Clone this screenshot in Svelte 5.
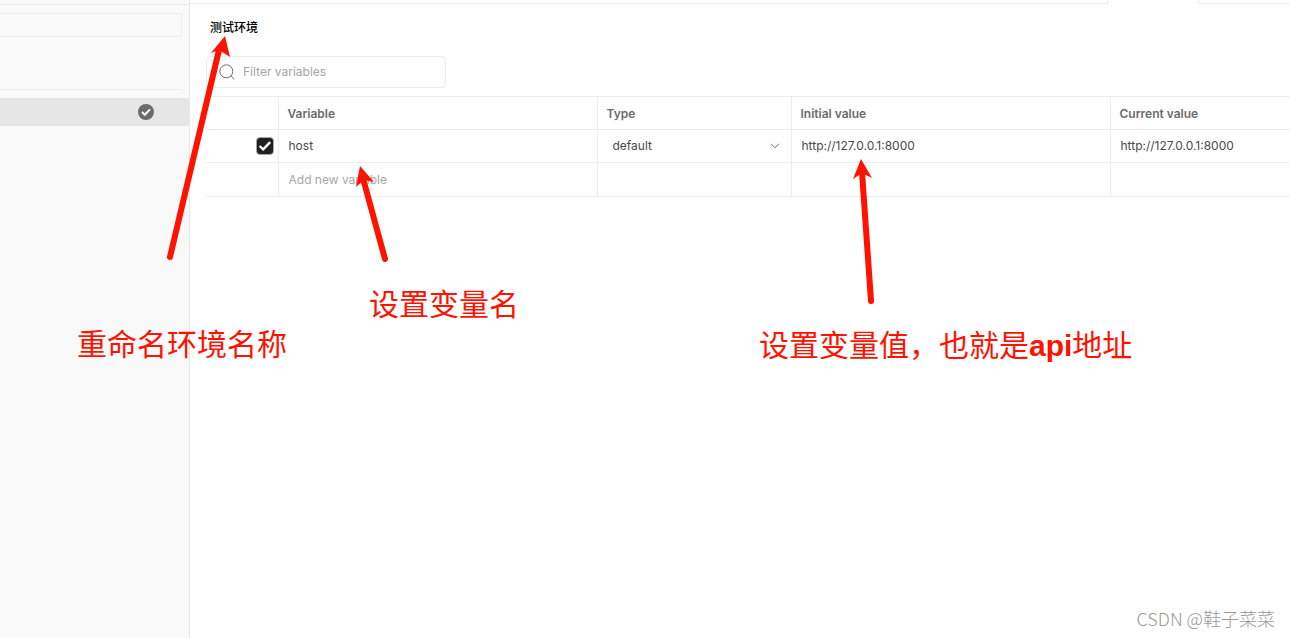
<script>
  let filter = $state('');
  let rows = $state([
    { enabled: true, name: 'host', type: 'default', initial: 'http://127.0.0.1:8000', current: 'http://127.0.0.1:8000' }
  ]);
  let draft = $state('');
</script>

<div class="app">
  <aside>
    <div class="side-top"></div>
    <div class="side-search">
      <input type="text" aria-label="Search environments" />
    </div>
    <div class="side-rule"></div>
    <button class="env" aria-label="Active environment">
      <svg width="16" height="16" viewBox="0 0 16 16">
        <circle cx="8" cy="8" r="8" fill="#6b6b6b" />
        <path d="M4 8 6.8 10.8 12 5.4" fill="none" stroke="#fff" stroke-width="2" />
      </svg>
    </button>
  </aside>

  <main>
    <div class="tabs">
      <div class="tab before"></div>
      <div class="tab after"></div>
    </div>

    <div class="content">
      <h1>测试环境</h1>

      <label class="filter">
        <svg width="18" height="18" viewBox="0 0 18 18" fill="none" stroke="#6b6b6b">
          <circle cx="8.3" cy="8.3" r="6.5" />
          <path d="M13 13 16.4 16.2" />
        </svg>
        <input type="text" placeholder="Filter variables" aria-label="Filter variables" bind:value={filter} />
      </label>

      <table>
        <colgroup>
          <col class="c-check" />
          <col class="c-value" />
          <col class="c-type" />
          <col class="c-value" />
          <col />
        </colgroup>
        <thead>
          <tr>
            <th></th>
            <th>Variable</th>
            <th>Type</th>
            <th>Initial value</th>
            <th>Current value</th>
          </tr>
        </thead>
        <tbody>
          {#each rows as row}
            <tr>
              <td>
                <label class="check">
                  <input type="checkbox" aria-label="Enable variable" bind:checked={row.enabled} />
                  {#if row.enabled}
                    <svg width="18" height="18" viewBox="0 0 18 18">
                      <path d="M3.6 9 7.2 12.4 14.2 5.2" fill="none" stroke="#fff" stroke-width="2.4" />
                    </svg>
                  {/if}
                </label>
              </td>
              <td><input type="text" aria-label="Variable" bind:value={row.name} /></td>
              <td>
                <div class="select">
                  <select aria-label="Type" bind:value={row.type}>
                    <option>default</option>
                    <option>secret</option>
                  </select>
                  <svg width="10" height="6" viewBox="0 0 10 6" fill="none" stroke="#6b6b6b">
                    <path d="M1 .8 5 4.8 9 .8" />
                  </svg>
                </div>
              </td>
              <td><input type="text" aria-label="Initial value" bind:value={row.initial} /></td>
              <td><input type="text" aria-label="Current value" bind:value={row.current} /></td>
            </tr>
          {/each}
          <tr class="new">
            <td></td>
            <td><input type="text" placeholder="Add new variable" aria-label="Add new variable" bind:value={draft} /></td>
            <td></td>
            <td></td>
            <td></td>
          </tr>
        </tbody>
      </table>
    </div>
  </main>

  <div class="notes">
    <svg width="900" height="320" viewBox="0 0 900 320" aria-hidden="true">
      <g stroke="#ff1200" stroke-width="6" stroke-linecap="round">
        <path d="M170 257 219 50" />
        <path d="M385 259 364 182" />
        <path d="M871 301 862 172" />
      </g>
      <g fill="#ff1200">
        <path d="M225 36 211 53 219 50 230 57Z" />
        <path d="M360 166 356 187 364 180 374 182Z" />
        <path d="M861 159 853 179 862 173 872 178Z" />
      </g>
    </svg>
    <p class="note rename">重命名环境名称</p>
    <p class="note name">设置变量名</p>
    <p class="note value">设置变量值，也就是<b>api</b>地址</p>
    <p class="credit">CSDN @鞋子菜菜</p>
  </div>
</div>

<style>
  :global(body) {
    margin: 0;
  }
  .app {
    position: relative;
    display: grid;
    grid-template-columns: 190px minmax(0, 1fr);
    min-height: 100vh;
    background: #fff;
    color: #212121;
    font: 12px/16px Inter, "Noto Sans CJK SC", sans-serif;
  }
  .app * {
    box-sizing: border-box;
  }
  input,
  select {
    font: inherit;
    color: inherit;
    outline: none;
  }
  aside {
    background: #f9f9f9;
    border-right: 1px solid #e6e6e6;
  }
  .side-top {
    height: 5px;
    border-bottom: 1px solid #ededed;
  }
  .side-search {
    padding: 8px 7px 0 0;
  }
  .side-search input {
    display: block;
    width: 100%;
    height: 24px;
    border: 1px solid #ededed;
    border-left: 0;
    border-radius: 0 2px 2px 0;
    background: transparent;
  }
  .side-rule {
    height: 53px;
    margin: 0 7px 8px 0;
    border-bottom: 1px solid #ededed;
  }
  .env {
    display: flex;
    justify-content: flex-end;
    align-items: center;
    width: 100%;
    height: 28px;
    padding: 0 35px 0 0;
    border: 0;
    background: #e6e6e6;
  }
  .tabs {
    display: flex;
    justify-content: space-between;
    gap: 90px;
  }
  .tab {
    height: 4px;
    border: 0 solid #ededed;
    border-bottom-width: 1px;
  }
  .before {
    flex: 1;
    border-right-width: 1px;
  }
  .after {
    width: 92px;
    border-left-width: 1px;
  }
  .content {
    padding: 16px 0 0 16px;
  }
  h1 {
    margin: 0 4px 20px;
    color: #000;
    font-size: 12px;
    line-height: 16px;
    font-weight: 500;
  }
  .filter {
    display: flex;
    align-items: center;
    gap: 7px;
    width: 240px;
    height: 32px;
    margin-bottom: 8px;
    padding: 0 11px;
    border: 1px solid #ededed;
    border-radius: 4px;
  }
  .filter input {
    flex: 1;
    min-width: 0;
    padding: 0;
    border: 0;
    background: none;
  }
  ::placeholder {
    color: #a6a6a6;
    opacity: 1;
  }
  table {
    width: 100%;
    table-layout: fixed;
    border-collapse: collapse;
    border-top: 1px solid #ededed;
  }
  .c-check {
    width: 72px;
  }
  .c-value {
    width: 319px;
  }
  .c-type {
    width: 194px;
  }
  th,
  td {
    height: 33px;
    padding: 0 9px;
    border-bottom: 1px solid #ededed;
    text-align: left;
  }
  .new td {
    height: 34px;
  }
  th + th,
  td + td {
    border-left: 1px solid #ededed;
  }
  th {
    padding-top: 2px;
    color: #6b6b6b;
    font-weight: 600;
  }
  td {
    color: #4a4a4a;
  }
  td > input {
    display: block;
    width: 100%;
    padding: 0 1px;
    border: 0;
    background: none;
  }
  .check {
    display: grid;
    justify-content: end;
    margin-right: -5px;
  }
  .check input,
  .check svg {
    grid-area: 1 / 1;
    width: 18px;
    height: 18px;
    margin: 0;
  }
  .check svg {
    pointer-events: none;
  }
  .check input {
    appearance: none;
    border: 1px solid #a6a6a6;
    border-radius: 4px;
  }
  .check input:checked {
    background: #212121;
  }
  .select {
    display: flex;
    align-items: center;
    padding: 0 2px 0 6px;
  }
  .select select {
    appearance: none;
    flex: 1;
    margin-right: -10px;
    padding: 0;
    border: 0;
    background: none;
  }
  .select svg {
    pointer-events: none;
  }
  .notes {
    position: absolute;
    inset: 0;
    overflow: hidden;
    pointer-events: none;
  }
  .notes svg {
    position: absolute;
    top: 0;
    left: 0;
  }
  .note {
    position: absolute;
    margin: 0;
    color: #ff1200;
    font: 30px/40px "Liberation Sans", "Noto Sans CJK SC", sans-serif;
    white-space: nowrap;
  }
  .note b {
    font-weight: 700;
  }
  .rename {
    top: 325px;
    left: 77px;
  }
  .name {
    top: 285px;
    left: 369px;
  }
  .value {
    top: 326px;
    left: 759px;
  }
  .credit {
    position: absolute;
    right: 15px;
    bottom: 8px;
    margin: 0;
    color: #999;
    font: 300 18px/24px "Noto Sans CJK SC", sans-serif;
  }
</style>
